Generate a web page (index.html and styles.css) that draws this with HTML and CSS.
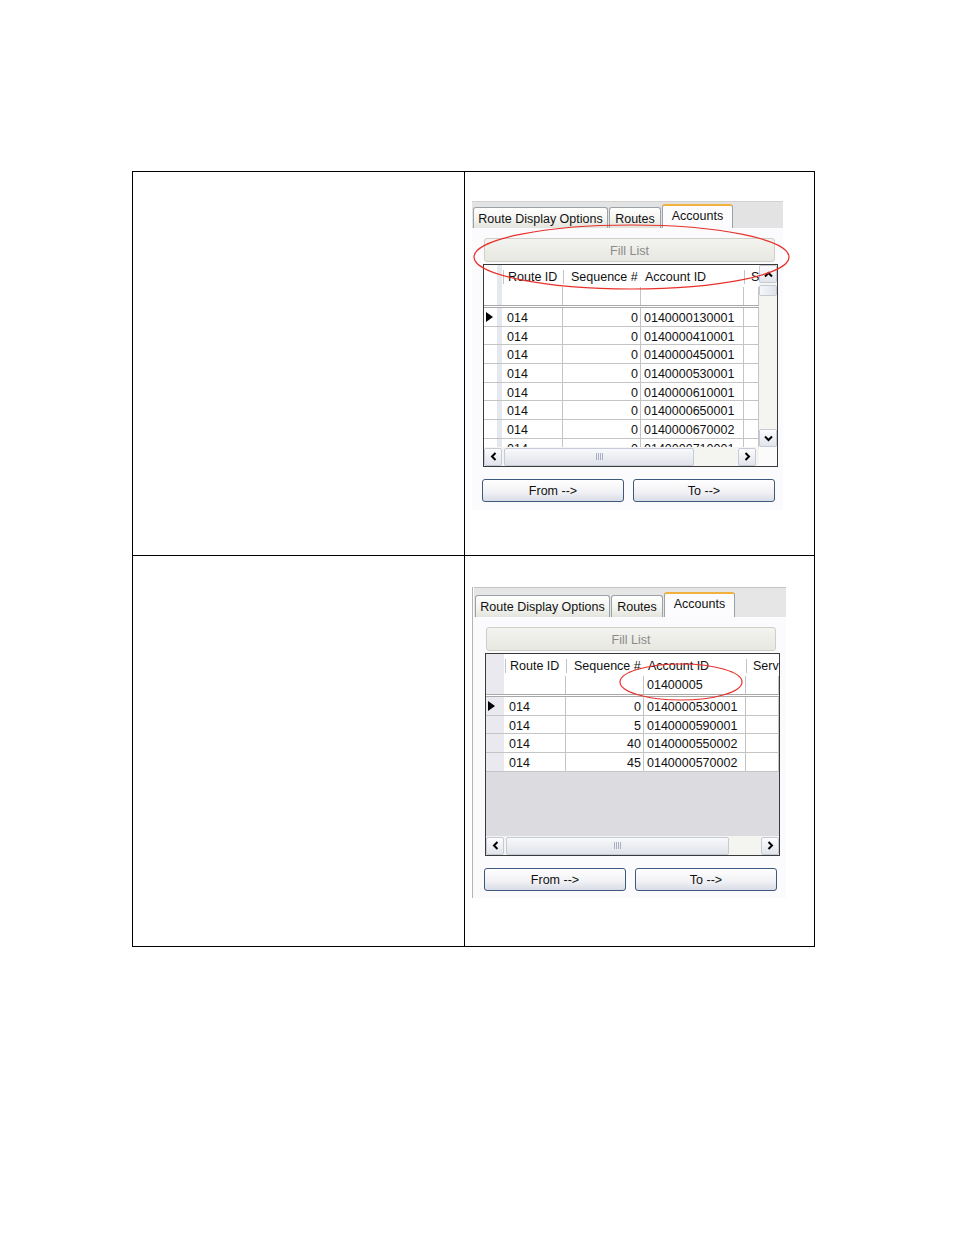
FILE: index.html
```html
<!DOCTYPE html>
<html>
<head>
<meta charset="utf-8">
<link rel="stylesheet" href="styles.css">
</head>
<body>
<table class="doc">
  <colgroup><col class="c-left"><col class="c-right"></colgroup>
  <tr class="r1">
    <td></td>
    <td>
      <div class="shot shot-a">
        <div class="tabstrip">
          <div class="tab t1">Route Display Options</div>
          <div class="tab t2">Routes</div>
          <div class="tab t3 active">Accounts</div>
        </div>
        <div class="body">
          <div class="fill">Fill List</div>
          <div class="grid grid-a">
            <div class="cells">
              <div class="row head"><div class="rh"></div><div>Route ID</div><div class="hs">Sequence #</div><div class="ha">Account ID</div><div class="hx">S</div></div>
              <div class="row filter"><div class="rh"></div><div></div><div></div><div></div><div></div></div>
              <div class="row data cur"><div class="rh"></div><div>014</div><div class="num">0</div><div class="acc">0140000130001</div><div></div></div>
              <div class="row data"><div class="rh"></div><div>014</div><div class="num">0</div><div class="acc">0140000410001</div><div></div></div>
              <div class="row data"><div class="rh"></div><div>014</div><div class="num">0</div><div class="acc">0140000450001</div><div></div></div>
              <div class="row data"><div class="rh"></div><div>014</div><div class="num">0</div><div class="acc">0140000530001</div><div></div></div>
              <div class="row data"><div class="rh"></div><div>014</div><div class="num">0</div><div class="acc">0140000610001</div><div></div></div>
              <div class="row data"><div class="rh"></div><div>014</div><div class="num">0</div><div class="acc">0140000650001</div><div></div></div>
              <div class="row data"><div class="rh"></div><div>014</div><div class="num">0</div><div class="acc">0140000670002</div><div></div></div>
              <div class="row data"><div class="rh"></div><div>014</div><div class="num">0</div><div class="acc">0140000710001</div><div></div></div>
            </div>
            <div class="vscroll">
              <div class="sbtn"><svg width="9" height="9" viewBox="0 0 9 9"><polyline points="1,6.5 4.5,3 8,6.5" fill="none" stroke="#000" stroke-width="2"/></svg></div>
              <div class="vthumb"></div>
              <div class="sbtn down"><svg width="9" height="9" viewBox="0 0 9 9"><polyline points="1,2.5 4.5,6 8,2.5" fill="none" stroke="#000" stroke-width="2"/></svg></div>
            </div>
            <div class="hscroll">
              <div class="sbtn"><svg width="9" height="9" viewBox="0 0 9 9"><polyline points="6.5,1 3,4.5 6.5,8" fill="none" stroke="#000" stroke-width="2"/></svg></div>
              <div class="hthumb"></div>
              <div class="sbtn right"><svg width="9" height="9" viewBox="0 0 9 9"><polyline points="2.5,1 6,4.5 2.5,8" fill="none" stroke="#000" stroke-width="2"/></svg></div>
            </div>
            <div class="corner"></div>
          </div>
          <div class="buttons"><div class="btn">From --&gt;</div><div class="btn">To --&gt;</div></div>
        </div>
        <svg class="mark" width="312" height="310"><ellipse cx="159.5" cy="56" rx="157.5" ry="32" fill="none" stroke="#e8302a" stroke-width="1.2"/></svg>
      </div>
    </td>
  </tr>
  <tr class="r2">
    <td></td>
    <td>
      <div class="shot shot-b">
        <div class="tabstrip">
          <div class="tab t1">Route Display Options</div>
          <div class="tab t2">Routes</div>
          <div class="tab t3 active">Accounts</div>
        </div>
        <div class="body">
          <div class="fill">Fill List</div>
          <div class="grid grid-b">
            <div class="cells">
              <div class="row head"><div class="rh"></div><div>Route ID</div><div class="hs">Sequence #</div><div class="ha">Account ID</div><div class="hx">Serv</div></div>
              <div class="row filter"><div class="rh"></div><div></div><div></div><div class="acc">01400005</div><div></div></div>
              <div class="row data cur"><div class="rh"></div><div>014</div><div class="num">0</div><div class="acc">0140000530001</div><div></div></div>
              <div class="row data"><div class="rh"></div><div>014</div><div class="num">5</div><div class="acc">0140000590001</div><div></div></div>
              <div class="row data"><div class="rh"></div><div>014</div><div class="num">40</div><div class="acc">0140000550002</div><div></div></div>
              <div class="row data"><div class="rh"></div><div>014</div><div class="num">45</div><div class="acc">0140000570002</div><div></div></div>
            </div>
            <div class="hscroll">
              <div class="sbtn"><svg width="9" height="9" viewBox="0 0 9 9"><polyline points="6.5,1 3,4.5 6.5,8" fill="none" stroke="#000" stroke-width="2"/></svg></div>
              <div class="hthumb"></div>
              <div class="sbtn right"><svg width="9" height="9" viewBox="0 0 9 9"><polyline points="2.5,1 6,4.5 2.5,8" fill="none" stroke="#000" stroke-width="2"/></svg></div>
            </div>
          </div>
          <div class="buttons"><div class="btn">From --&gt;</div><div class="btn">To --&gt;</div></div>
        </div>
        <svg class="mark" width="312" height="310"><ellipse cx="208" cy="95" rx="61" ry="18" fill="none" stroke="#e8302a" stroke-width="1.2"/></svg>
      </div>
    </td>
  </tr>
</table>
</body>
</html>
```

FILE: styles.css
```css
html, body {
  margin: 0;
  padding: 0;
  background: #fff;
}
body {
  font-family: "Liberation Sans", Arial, sans-serif;
}

.doc {
  border-collapse: collapse;
  table-layout: fixed;
  width: 683px;
  margin: 171px 0 0 132px;
}
.doc td {
  border: 1px solid #000;
  padding: 0;
  vertical-align: top;
}
.c-left { width: 332px; }
.r1 td { height: 383px; }
.r2 td { height: 390px; }

/* screenshot panel */
.shot {
  position: relative;
  width: 311px;
  height: 309px;
  margin: 29px 0 0 7px;
  background: #fbfbfd;
  font-size: 12.5px;
  color: #111;
}
.shot-b {
  width: 312px;
  height: 311px;
  margin: 31px 0 0 7px;
  border-left: 1px solid #b4b4b4;
  padding-left: 1px;
}

.tabstrip {
  box-sizing: border-box;
  height: 27px;
  display: flex;
  align-items: flex-end;
  padding-left: 1px;
  background: #e3e3e3;
  border-top: 1px solid #d2d2d2;
}
.shot-b .tabstrip {
  height: 30px;
  background: #e6e6e6;
  border-top: 1px solid #c4c4c4;
}
.tab {
  box-sizing: border-box;
  height: 21px;
  border: 1px solid #9aa2a8;
  border-bottom: none;
  border-radius: 3px 3px 0 0;
  background: linear-gradient(#ffffff, #f4f4f0 55%, #e4e4de);
  line-height: 23px;
  text-align: center;
  white-space: nowrap;
}
.t1 { width: 135px; }
.t2 { width: 52px; margin-left: 1px; }
.t3 { width: 71px; margin-left: 1px; }
.tab.active {
  height: 24px;
  background: #fcfcfe;
  border-top: 2px solid #f2b13c;
  line-height: 20px;
}
.shot-b .tab { height: 22px; line-height: 23px; }
.shot-b .tab.active { height: 25px; line-height: 21px; }

.body {
  padding: 10px 0 0 11px;
}
.fill {
  box-sizing: border-box;
  width: 291px;
  height: 24px;
  margin-left: 1px;
  border: 1px solid #cfcfc8;
  border-radius: 3px;
  background: linear-gradient(#f3f3ef, #e8e8e2);
  color: #8a8a8a;
  text-align: center;
  line-height: 24px;
}
.shot-b .fill { width: 290px; }

/* data grid */
.grid {
  box-sizing: border-box;
  width: 295px;
  height: 203px;
  margin-top: 2px;
  border: 1px solid #3a3a3a;
  display: grid;
  overflow: hidden;
}
.grid-a {
  --cols: 19px 60px 78px 103px 1fr;
  grid-template-columns: 1fr 18px;
  grid-template-rows: 1fr 19px;
}
.grid-b {
  --cols: 19px 61px 78px 102px 1fr;
  grid-template-columns: 1fr;
  grid-template-rows: 1fr 19px;
}
.cells {
  overflow: hidden;
  background: #fff;
}
.grid-b .cells { background: #dcdce0; }

.row {
  display: grid;
  grid-template-columns: var(--cols);
  box-sizing: border-box;
  background: #fff;
}
.row > div {
  box-sizing: border-box;
  white-space: nowrap;
  overflow: hidden;
}
.head { height: 22px; }
.head > div {
  height: 22px;
  padding-top: 2px;
  line-height: 21px;
  padding-left: 5px;
  background: linear-gradient(#c4c4c4, #c4c4c4) 0 5px / 1px 14px no-repeat #fff;
}
.head > .hs { padding-left: 8px; }
.head > .ha { padding-left: 4px; background: #fff; overflow: visible; }
.head > .hx { padding-left: 7px; }
.head > .rh { background: #fff; }

.filter {
  height: 21px;
  border-bottom: 3px double #a9a9a9;
}
.filter > div {
  border-right: 1px solid #c4c4c4;
  line-height: 18px;
}
.data {
  height: 18.67px;
  border-bottom: 1px solid #c4c4c4;
}
.data > div {
  border-right: 1px solid #c4c4c4;
  padding-top: 3px;
  line-height: 14.67px;
  padding-left: 4px;
}
.row > .rh {
  padding: 0;
  border-right: none;
  background: linear-gradient(90deg, #fff 0 13px, #e6e8f0 13px 18px, #fff 18px);
}
.grid-b .row > .rh {
  background: linear-gradient(90deg, #e9e9ef 0 18px, #fff 18px);
}
.data > .num {
  text-align: right;
  padding-left: 0;
  padding-right: 2px;
}
.row > .acc { padding-left: 3px; }
.cur > .rh::before {
  content: "";
  display: block;
  width: 0;
  height: 0;
  margin: 4px 0 0 2px;
  border-left: 7px solid #000;
  border-top: 5px solid transparent;
  border-bottom: 5px solid transparent;
}

/* scrollbars */
.sbtn {
  box-sizing: border-box;
  width: 18px;
  height: 18px;
  flex: none;
  border: 1px solid #c5cad6;
  border-radius: 2px;
  background: linear-gradient(#fdfdfe, #e2e4ec);
  display: flex;
  align-items: center;
  justify-content: center;
}
.vscroll {
  display: flex;
  flex-direction: column;
  background: #f4f4f1;
}
.vthumb {
  box-sizing: border-box;
  height: 11px;
  margin-top: 2px;
  border: 1px solid #c5cad6;
  border-radius: 2px;
  background: linear-gradient(90deg, #f6f7fa, #dfe2ea);
}
.vscroll .down { margin-top: auto; }
.hscroll {
  display: flex;
  align-items: center;
  background: #f4f4f1;
}
.grid-a .hscroll { padding-right: 3px; }
.hthumb {
  box-sizing: border-box;
  height: 18px;
  margin-left: 2px;
  border: 1px solid #c5cad6;
  border-radius: 2px;
  background:
    repeating-linear-gradient(90deg, #a9b0c2 0 1px, transparent 1px 2px) center / 7px 7px no-repeat,
    linear-gradient(#f8f9fb, #e0e3ea);
}
.grid-a .hthumb { width: 190px; }
.grid-b .hthumb { width: 223px; }
.hscroll .right { margin-left: auto; }
.corner { background: #fbfbfb; }

/* buttons */
.buttons {
  display: flex;
  gap: 9px;
  margin: 12px 0 0 -1px;
}
.btn {
  box-sizing: border-box;
  width: 142px;
  height: 23px;
  border: 1px solid #3d5a7e;
  border-radius: 3px;
  background: linear-gradient(#ffffff, #f1f1f5 60%, #d9dce6);
  text-align: center;
  line-height: 23px;
}

/* annotation */
.mark {
  position: absolute;
  left: 0;
  top: 0;
  overflow: visible;
  pointer-events: none;
}
```
